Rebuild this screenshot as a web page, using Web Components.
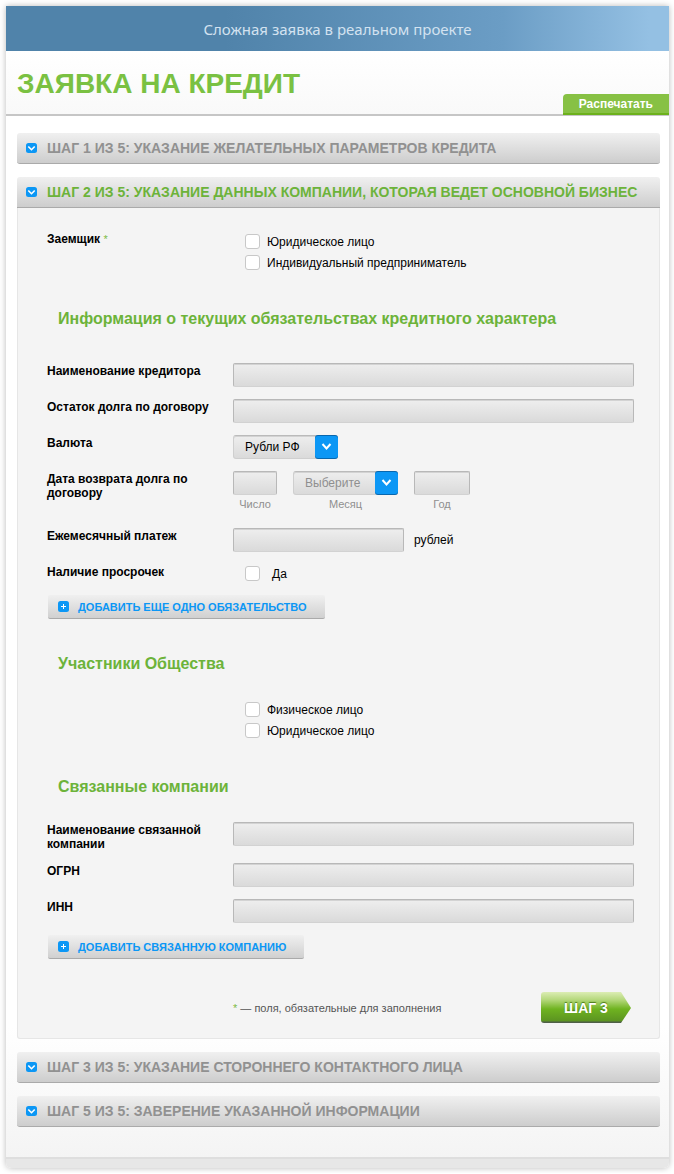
<!DOCTYPE html>
<html lang="ru">
<head>
<meta charset="UTF-8">
<meta name="viewport" content="width=device-width, initial-scale=1">
<title>Заявка на кредит</title>
<style>
    body {
        margin: 0;
        padding: 6px 5px 5px 6px;
        background: #fff;
        color: #000;
        font: 12px/14px "Liberation Sans", Arial, sans-serif;
    }
</style>
</head>
<body>
<loan-page>
    <page-banner slot="banner">Сложная заявка в реальном проекте</page-banner>
    <page-header slot="header" action="Распечатать">Заявка на кредит</page-header>

    <step-panel label="Шаг 1 из 5: Указание желательных параметров кредита"></step-panel>

    <step-panel label="Шаг 2 из 5: Указание данных компании, которая ведет основной бизнес" open>
        <check-group label="Заемщик" required options="Юридическое лицо|Индивидуальный предприниматель"></check-group>

        <form-section label="Информация о текущих обязательствах кредитного характера" spacious>
            <text-field label="Наименование кредитора"></text-field>
            <text-field label="Остаток долга по договору"></text-field>
            <select-field label="Валюта" value="Рубли РФ"></select-field>
            <date-field label="Дата возврата долга по договору"></date-field>
            <text-field label="Ежемесячный платеж" unit="рублей"></text-field>
            <check-group label="Наличие просрочек" options="Да" wide></check-group>
            <add-button>Добавить еще одно обязательство</add-button>
        </form-section>

        <form-section label="Участники Общества">
            <check-group name="Участники Общества" options="Физическое лицо|Юридическое лицо"></check-group>
        </form-section>

        <form-section label="Связанные компании">
            <text-field label="Наименование связанной компании"></text-field>
            <text-field label="ОГРН"></text-field>
            <text-field label="ИНН"></text-field>
            <add-button>Добавить связанную компанию</add-button>
        </form-section>

        <panel-footer note="— поля, обязательные для заполнения">Шаг 3</panel-footer>
    </step-panel>

    <step-panel label="Шаг 3 из 5: Указание стороннего контактного лица"></step-panel>
    <step-panel label="Шаг 5 из 5: Заверение указанной информации"></step-panel>
</loan-page>

<script>
// Rules shared by every form row
const rowStyles = `
    :host { display: block; }
    * { box-sizing: border-box; }
    .row {
        display: grid;
        grid-template-columns: 170px 1fr;
        column-gap: 16px;
        align-items: start;
    }
    .name {
        padding-top: 1px;
        font-weight: bold;
    }
    .star { color: #7dbb45; font-weight: normal; font-size: 11px; }
    input, select { font: inherit; margin: 0; }
    input[type=text], select {
        display: block;
        width: 100%;
        height: 24px;
        padding: 0 6px;
        border: 1px solid #b8b8b8;
        border-bottom-color: #d2d2d2;
        border-radius: 2px;
        background: linear-gradient(#eee, #dadada);
        box-shadow: inset 0 1px #d3d3d3;
        outline-color: #0c97f5;
    }
    .pick { display: grid; width: 105px; }
    .pick select {
        grid-area: 1 / 1;
        appearance: none;
        padding: 0 24px 0 11px;
        border-color: #bbb #cfcfcf #cfcfcf;
        border-radius: 3px;
        color: inherit;
    }
    .pick svg {
        grid-area: 1 / 1;
        justify-self: end;
        pointer-events: none;
    }
`;

const selectMarkup = (id, value) => `
    <span class="pick">
        <select id="${id}"><option>${value}</option></select>
        <svg width="23" height="24" viewBox="0 0 23 24" aria-hidden="true">
            <rect width="23" height="24" rx="3" fill="#0867ae"/>
            <rect width="23" height="22" rx="3" y="1" fill="#0c97f5"/>
            <path d="M7.5 9l4 4.5 4-4.5" fill="none" stroke="#fff" stroke-width="2"/>
        </svg>
    </span>
`;

class BaseElement extends HTMLElement {
    constructor() {
        super();
        this.attachShadow({ mode: 'open' });
    }

    connectedCallback() {
        this.shadowRoot.innerHTML = this.render();
    }

    attr(name) {
        return this.getAttribute(name) || '';
    }
}

class LoanPage extends BaseElement {
    render() {
        return `
            <style>
                :host {
                    display: block;
                    border-radius: 0 0 5px 5px;
                    box-shadow: 0 0 6px rgba(0, 0, 0, .28);
                    background: #fff;
                }
                main {
                    display: flex;
                    flex-direction: column;
                    gap: 13px;
                    padding: 17px 9px 30px 11px;
                    background: linear-gradient(to top, #f4f4f4, #fff 130px);
                }
                .bottom {
                    height: 9px;
                    border-top: 2px solid #dedede;
                    border-radius: 0 0 5px 5px;
                    background: #e7e7e7;
                }
            </style>
            <slot name="banner"></slot>
            <slot name="header"></slot>
            <main><slot></slot></main>
            <div class="bottom"></div>
        `;
    }
}

class PageBanner extends BaseElement {
    render() {
        return `
            <style>
                :host {
                    display: block;
                    background: linear-gradient(to right, #5083aa 33%, #6b9dc5 75%, #94c0e3 97%);
                    color: #d3e2f0;
                    font: 15px/46px "Noto Sans", "Open Sans", sans-serif;
                    height: 45px;
                    text-align: center;
                }
            </style>
            <slot></slot>
        `;
    }
}

class PageHeader extends BaseElement {
    render() {
        return `
            <style>
                :host {
                    display: flex;
                    justify-content: space-between;
                    align-items: flex-end;
                    border-bottom: 2px solid #c6c6c6;
                    box-shadow: 0 1px 1px #e6e6e6;
                    background: linear-gradient(#fff, #f9f9f9);
                }
                h1 {
                    margin: 0;
                    padding: 17px 0 14px 11px;
                    color: #7ac142;
                    font-size: 28px;
                    line-height: 32px;
                    text-transform: uppercase;
                }
                button {
                    height: 21px;
                    margin: 0 0 -1px;
                    padding: 1px 16px 0;
                    border: 0;
                    border-bottom: 2px solid #6cb11c;
                    border-radius: 4px 0 0 0;
                    background: #87c144;
                    color: #fff;
                    font: bold 12px/18px "Liberation Sans", Arial, sans-serif;
                    cursor: pointer;
                }
            </style>
            <h1><slot></slot></h1>
            <button type="button">${this.attr('action')}</button>
        `;
    }
}

class StepPanel extends BaseElement {
    render() {
        return `
            <style>
                :host { display: block; }
                h2 { margin: 0; }
                button {
                    display: flex;
                    align-items: center;
                    gap: 10px;
                    width: 100%;
                    min-height: 31px;
                    padding: 0 9px;
                    border: 0;
                    border-bottom: 1px solid #aaa;
                    border-radius: 3px;
                    background: linear-gradient(#f0f0f0, #cdcdcd);
                    color: #919191;
                    font: bold 14px/18px "Liberation Sans", Arial, sans-serif;
                    text-align: left;
                    text-transform: uppercase;
                    cursor: pointer;
                }
                svg { flex: none; }
                :host([open]) button {
                    border-radius: 3px 3px 0 0;
                    color: #6cb33a;
                }
                .body {
                    display: none;
                    padding: 23px 25px 15px 29px;
                    border: 1px solid #e6e6e6;
                    border-top: 0;
                    border-radius: 0 0 3px 3px;
                    background: #f4f4f4;
                }
                :host([open]) .body { display: block; }
            </style>
            <h2>
                <button type="button" aria-expanded="${this.hasAttribute('open')}">
                    <svg width="11" height="10" viewBox="0 0 11 10" aria-hidden="true">
                        <rect width="11" height="10" rx="2.5" fill="#0c97f5"/>
                        <path d="M2.3 3.5l3.2 3.2 3.2-3.2" fill="none" stroke="#fff" stroke-width="1.6"/>
                    </svg>
                    ${this.attr('label')}
                </button>
            </h2>
            <div class="body"><slot></slot></div>
        `;
    }

    connectedCallback() {
        super.connectedCallback();
        const button = this.shadowRoot.querySelector('button');
        button.addEventListener('click', () => {
            button.setAttribute('aria-expanded', this.toggleAttribute('open'));
        });
    }
}

class FormSection extends BaseElement {
    render() {
        return `
            <style>
                :host { display: block; }
                h3 {
                    margin: 0;
                    padding: 35px 0 25px 11px;
                    color: #6cb33a;
                    font-size: 16px;
                    line-height: 20px;
                }
                :host([spacious]) h3 { padding-bottom: 34px; }
                .rows {
                    display: flex;
                    flex-direction: column;
                    gap: 12px;
                }
            </style>
            <h3>${this.attr('label')}</h3>
            <div class="rows"><slot></slot></div>
        `;
    }
}

class TextField extends BaseElement {
    render() {
        const unit = this.attr('unit');
        return `
            <style>
                ${rowStyles}
                .control {
                    display: flex;
                    align-items: center;
                    gap: 10px;
                }
                :host([unit]) input { width: 171px; }
            </style>
            <div class="row">
                <label class="name" for="field">${this.attr('label')}</label>
                <div class="control">
                    <input type="text" id="field">
                    ${unit ? `<span>${unit}</span>` : ''}
                </div>
            </div>
        `;
    }
}

class SelectField extends BaseElement {
    render() {
        return `
            <style>${rowStyles}</style>
            <div class="row">
                <label class="name" for="field">${this.attr('label')}</label>
                ${selectMarkup('field', this.attr('value'))}
            </div>
        `;
    }
}

class DateField extends BaseElement {
    render() {
        return `
            <style>
                ${rowStyles}
                .parts {
                    display: flex;
                    gap: 16px;
                    color: #8f8f8f;
                    font-size: 11px;
                }
                .part {
                    display: flex;
                    flex-direction: column-reverse;
                    gap: 2px;
                    padding-bottom: 5px;
                    text-align: center;
                }
                .parts select { font-size: 12px; }
                .day { width: 44px; }
                .year { width: 56px; }
            </style>
            <div class="row" role="group" aria-labelledby="name">
                <span class="name" id="name">${this.attr('label')}</span>
                <div class="parts">
                    <div class="part day"><label for="day">Число</label><input type="text" id="day"></div>
                    <div class="part"><label for="month">Месяц</label>${selectMarkup('month', 'Выберите')}</div>
                    <div class="part year"><label for="year">Год</label><input type="text" id="year"></div>
                </div>
            </div>
        `;
    }
}

class CheckGroup extends BaseElement {
    render() {
        const star = this.hasAttribute('required') ? ' <span class="star">*</span>' : '';
        const options = this.attr('options').split('|').map(option => `
            <label><input type="checkbox">${option}</label>
        `).join('');
        return `
            <style>
                ${rowStyles}
                .options {
                    display: flex;
                    flex-direction: column;
                    align-items: flex-start;
                    gap: 6px;
                    padding: 3px 0 4px 12px;
                }
                label {
                    display: flex;
                    align-items: center;
                    gap: 7px;
                    height: 15px;
                }
                :host([wide]) label { gap: 12px; }
                :host([wide]) .options { padding: 2px 0 2px 12px; }
                input {
                    appearance: none;
                    width: 15px;
                    height: 15px;
                    border: 1px solid #c8c8c8;
                    border-radius: 3px;
                    background: #fff;
                }
                input:checked {
                    background: #0c97f5;
                    box-shadow: inset 0 0 0 3px #fff;
                }
            </style>
            <div class="row" role="group" aria-label="${this.attr('label') || this.attr('name')}">
                <span class="name">${this.attr('label')}${star}</span>
                <div class="options">${options}</div>
            </div>
        `;
    }
}

class AddButton extends BaseElement {
    render() {
        return `
            <style>
                :host { display: block; }
                button {
                    display: flex;
                    align-items: center;
                    gap: 9px;
                    height: 24px;
                    margin-left: 1px;
                    padding: 0 18px 0 10px;
                    border: 0;
                    border-bottom: 1px solid #aaa;
                    border-radius: 2px;
                    background: linear-gradient(#f0f0f0, #d0d0d0);
                    color: #0c97f5;
                    font: bold 11px/14px "Liberation Sans", Arial, sans-serif;
                    text-transform: uppercase;
                    cursor: pointer;
                }
            </style>
            <button type="button">
                <svg width="11" height="11" viewBox="0 0 11 11" aria-hidden="true">
                    <rect width="11" height="11" rx="2.5" fill="#0c97f5"/>
                    <path d="M5.5 3v5M3 5.5h5" stroke="#fff"/>
                </svg>
                <span><slot></slot></span>
            </button>
        `;
    }
}

class PanelFooter extends BaseElement {
    render() {
        return `
            <style>
                ${rowStyles}
                :host { padding-top: 33px; }
                .line {
                    display: flex;
                    justify-content: space-between;
                    align-items: center;
                    padding-right: 3px;
                }
                .note { color: #555; font-size: 11px; }
                button {
                    width: 90px;
                    height: 31px;
                    padding: 0;
                    border: 0;
                    border-radius: 3px;
                    background: linear-gradient(#dcedb4, #b5d87c 25%, #6fb320 55%, #5c9421 93%, #4f5f48 97%);
                    clip-path: polygon(0 0, 80px 0, 90px 16px, 80px 100%, 0 100%);
                    color: #fff;
                    font: bold 14px/16px "Liberation Sans", Arial, sans-serif;
                    text-shadow: 0 -1px 1px #4b7a18;
                    text-transform: uppercase;
                    cursor: pointer;
                }
            </style>
            <div class="row">
                <span></span>
                <div class="line">
                    <span class="note"><span class="star">*</span> ${this.attr('note')}</span>
                    <button type="button"><slot></slot></button>
                </div>
            </div>
        `;
    }
}

customElements.define('loan-page', LoanPage);
customElements.define('page-banner', PageBanner);
customElements.define('page-header', PageHeader);
customElements.define('step-panel', StepPanel);
customElements.define('form-section', FormSection);
customElements.define('text-field', TextField);
customElements.define('select-field', SelectField);
customElements.define('date-field', DateField);
customElements.define('check-group', CheckGroup);
customElements.define('add-button', AddButton);
customElements.define('panel-footer', PanelFooter);
</script>
</body>
</html>
